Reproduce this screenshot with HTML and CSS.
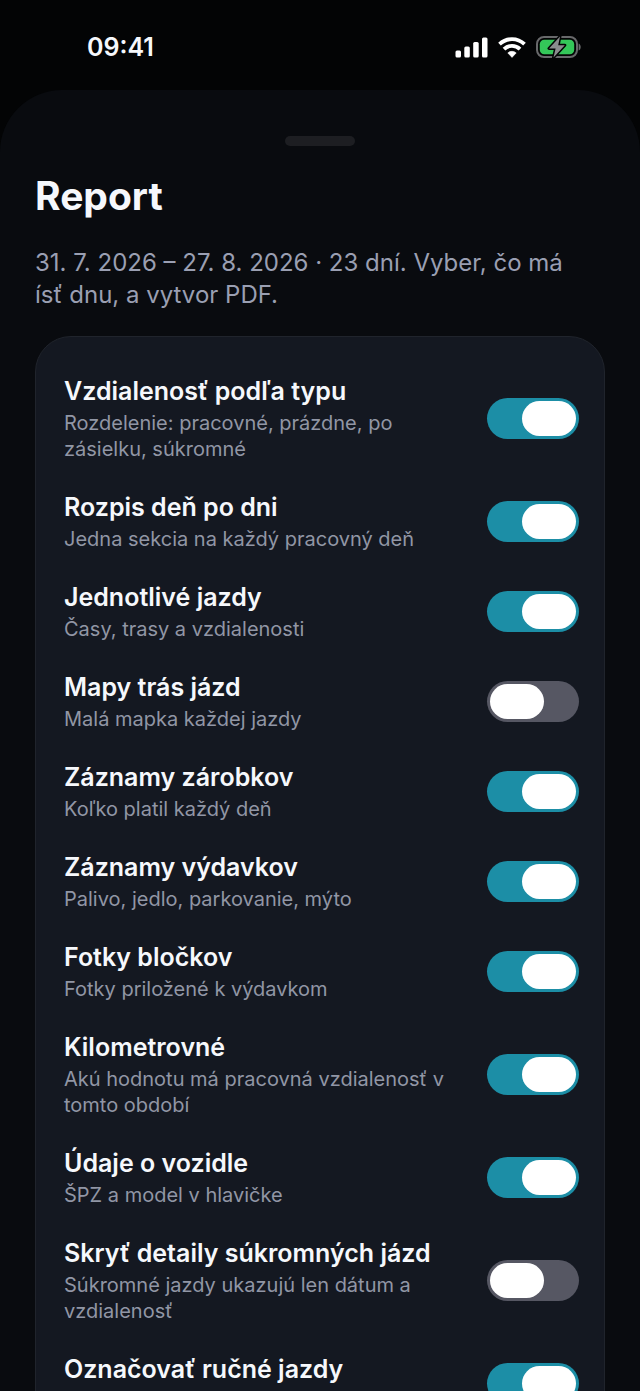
FILE: index.html
```html
<!DOCTYPE html>
<html lang="sk">
<head>
<meta charset="utf-8">
<meta name="viewport" content="width=device-width, initial-scale=1">
<title>Report</title>
<link rel="stylesheet" href="styles.css">
</head>
<body>
<header class="status">
  <time class="clock">09:41</time>
  <div class="indicators">
    <svg width="33" height="21" viewBox="0 0 33 21" fill="#fff" aria-hidden="true">
      <rect x="0.5" y="13.5" width="5.5" height="7" rx="1.5"/><rect x="9.3" y="9.5" width="5.5" height="11" rx="1.5"/><rect x="18.2" y="5" width="5.5" height="15.5" rx="1.5"/><rect x="27" y="0.5" width="5.5" height="20" rx="1.5"/>
    </svg>
    <svg width="28" height="21" viewBox="0 0 28 21" aria-hidden="true">
      <g fill="none" stroke="#fff" stroke-width="3.8"><path d="M1.5 7.2a18 18 0 0 1 25 0"/><path d="M6 12.1a11.5 11.5 0 0 1 16 0"/></g>
      <path d="M9.8 15.9a6.4 6.4 0 0 1 8.4 0L14 20.4z" fill="#fff" stroke="#fff" stroke-width=".6" stroke-linejoin="round"/>
    </svg>
    <svg width="45" height="22" viewBox="0 0 45 22" aria-hidden="true">
      <rect x="1" y="1" width="40" height="20" rx="7" fill="none" stroke="#68696b" stroke-width="2"/>
      <path d="M42.6 7.5c2.8 1 2.8 6 0 7z" fill="#68696b"/>
      <rect x="3.8" y="3.8" width="34.4" height="14.4" rx="4.5" fill="#34c759"/>
      <path d="M24 .5 13 12.4h6.6L17.5 21.5 28.8 9.2h-6.6z" fill="#8b8c8e" stroke="#030405" stroke-width="3" stroke-linejoin="round" paint-order="stroke"/>
    </svg>
  </div>
</header>
<main class="sheet">
  <div class="grabber"></div>
  <h1 class="heading">Report</h1>
  <p class="intro">31. 7. 2026 – 27. 8. 2026 · 23 dní. Vyber, čo má ísť dnu, a vytvor PDF.</p>
  <div class="card">
    <label class="row"><span class="text"><span class="name">Vzdialenosť podľa typu</span><span class="hint">Rozdelenie: pracovné, prázdne, po zásielku, súkromné</span></span><input class="toggle" type="checkbox" role="switch" checked></label>
    <label class="row"><span class="text"><span class="name">Rozpis deň po dni</span><span class="hint">Jedna sekcia na každý pracovný deň</span></span><input class="toggle" type="checkbox" role="switch" checked></label>
    <label class="row"><span class="text"><span class="name">Jednotlivé jazdy</span><span class="hint">Časy, trasy a vzdialenosti</span></span><input class="toggle" type="checkbox" role="switch" checked></label>
    <label class="row"><span class="text"><span class="name">Mapy trás jázd</span><span class="hint">Malá mapka každej jazdy</span></span><input class="toggle" type="checkbox" role="switch"></label>
    <label class="row"><span class="text"><span class="name">Záznamy zárobkov</span><span class="hint">Koľko platil každý deň</span></span><input class="toggle" type="checkbox" role="switch" checked></label>
    <label class="row"><span class="text"><span class="name">Záznamy výdavkov</span><span class="hint">Palivo, jedlo, parkovanie, mýto</span></span><input class="toggle" type="checkbox" role="switch" checked></label>
    <label class="row"><span class="text"><span class="name">Fotky bločkov</span><span class="hint">Fotky priložené k výdavkom</span></span><input class="toggle" type="checkbox" role="switch" checked></label>
    <label class="row"><span class="text"><span class="name">Kilometrovné</span><span class="hint">Akú hodnotu má pracovná vzdialenosť v tomto období</span></span><input class="toggle" type="checkbox" role="switch" checked></label>
    <label class="row"><span class="text"><span class="name">Údaje o vozidle</span><span class="hint">ŠPZ a model v hlavičke</span></span><input class="toggle" type="checkbox" role="switch" checked></label>
    <label class="row"><span class="text"><span class="name">Skryť detaily súkromných jázd</span><span class="hint">Súkromné jazdy ukazujú len dátum a vzdialenosť</span></span><input class="toggle" type="checkbox" role="switch"></label>
    <label class="row"><span class="text"><span class="name">Označovať ručné jazdy</span></span><input class="toggle" type="checkbox" role="switch" checked></label>
  </div>
</main>
</body>
</html>
```
FILE: styles.css
```css
* { box-sizing: border-box; }
html, body { height: 100%; }
body {
  margin: 0;
  background: #030405;
  color: #f6f8fc;
  font-family: Inter, "Liberation Sans", sans-serif;
  display: flex;
  flex-direction: column;
  overflow: hidden;
}
.status {
  flex: none;
  height: 90px;
  padding: 4px 59px 0 87px;
  display: flex;
  align-items: center;
  justify-content: space-between;
}
.clock { font-size: 25px; line-height: 32px; font-weight: 600; }
.indicators { display: flex; align-items: center; gap: 10px; }
.sheet {
  flex: 1;
  min-height: 0;
  overflow: hidden;
  padding: 46px 35px 0;
  background: #090b0f;
  border-radius: 62px 62px 0 0;
}
.grabber {
  width: 70px;
  height: 10px;
  margin: 0 auto;
  border-radius: 5px;
  background: #1d1e22;
}
.heading { margin: 26px 0 0; font-size: 39px; line-height: 48px; font-weight: 700; }
.intro { margin: 27px 0 0; padding-right: 24px; font-size: 24px; line-height: 32px; color: #9a9fb2; }
.card {
  margin-top: 25px;
  padding: 38px 25px 40px 28px;
  display: flex;
  flex-direction: column;
  gap: 29px;
  background: #141821;
  border: 1px solid #20242c;
  border-radius: 36px;
}
.row { display: flex; align-items: center; justify-content: space-between; gap: 24px; cursor: pointer; }
.row:last-child { min-height: 61px; }
.row:last-child .text { align-self: flex-start; }
.text { display: flex; flex-direction: column; gap: 3px; }
.name { font-size: 25px; line-height: 32px; font-weight: 600; }
.hint { font-size: 20px; line-height: 26px; color: #9196a5; }
.toggle {
  appearance: none;
  flex: none;
  width: 92px;
  height: 41px;
  margin: 0;
  padding: 0 3px;
  display: flex;
  align-items: center;
  border-radius: 21px;
  background: #565763;
  cursor: pointer;
}
.toggle::before { content: ""; width: 54px; height: 35px; border-radius: 18px; background: #fff; }
.toggle:checked { background: #1c8ea6; justify-content: flex-end; }
```
